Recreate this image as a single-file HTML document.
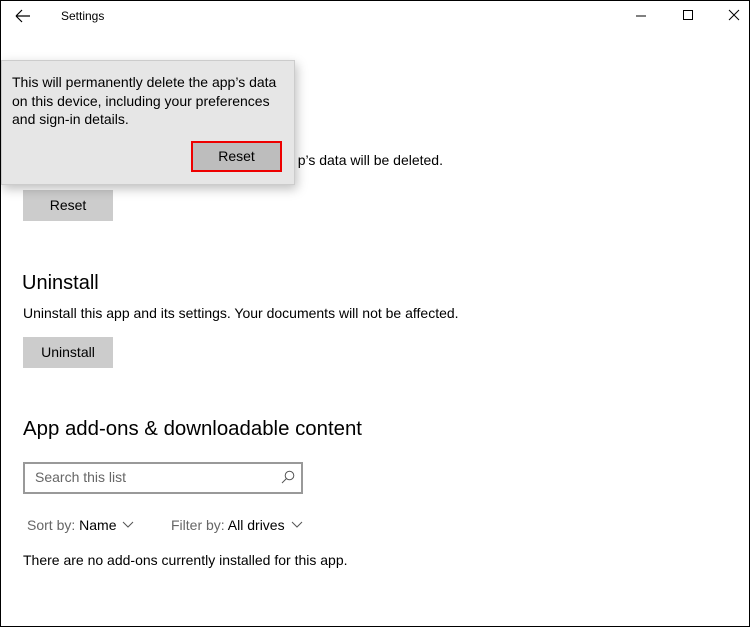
<!DOCTYPE html>
<html><head><style>
*{margin:0;padding:0;box-sizing:border-box}
body{width:750px;height:627px;overflow:hidden;background:#fff;font-family:"Liberation Sans",sans-serif;color:#000;position:relative}
.win{position:absolute;left:0;top:0;width:750px;height:627px;border:1px solid #000}
.a{position:absolute;white-space:nowrap}
.btn{position:absolute;background:#ccc;font-size:14px;text-align:center}
</style></head><body>
<div class="win"></div>
<svg class="a" style="left:15px;top:9px" width="16" height="14"><path d="M1 7H15M1 7L7 1M1 7L7 13" stroke="#000" stroke-width="1.2" fill="none"/></svg>
<div class="a" style="left:61px;top:9px;font-size:12px">Settings</div>
<svg class="a" style="left:636px;top:9px" width="110" height="14"><path d="M0 7H10" stroke="#000"/><path d="M47.5 1.5h9v9h-9z" stroke="#000" fill="none"/><path d="M93 1L103 11M103 1L93 11" stroke="#000"/></svg>
<div class="a" style="right:307px;top:152px;font-size:14px">p’s data will be deleted.</div>
<div class="btn" style="left:23px;top:190px;width:90px;height:31px;line-height:31px">Reset</div>
<div class="a" style="left:22px;top:272px;font-size:20px">Uninstall</div>
<div class="a" style="left:23px;top:305px;font-size:14px">Uninstall this app and its settings. Your documents will not be affected.</div>
<div class="btn" style="left:23px;top:337px;width:90px;height:31px;line-height:31px">Uninstall</div>
<div class="a" style="left:23px;top:418px;font-size:20.4px">App add-ons &amp; downloadable content</div>
<div class="a" style="left:23px;top:462px;width:280px;height:32px;border:2px solid #999"></div>
<div class="a" style="left:35px;top:469px;font-size:14px;color:#666">Search this list</div>
<svg class="a" style="left:281px;top:470px" width="14" height="14"><circle cx="8.5" cy="5.5" r="4.3" stroke="#555" fill="none"/><path d="M5.5 8.5L1 13" stroke="#555"/></svg>
<div class="a" style="left:27px;top:517px;font-size:14px"><span style="color:#666">Sort by:</span> Name</div>
<svg class="a" style="left:122px;top:521px" width="12" height="7"><path d="M1 1L6 6L11 1" stroke="#555" fill="none"/></svg>
<div class="a" style="left:171px;top:517px;font-size:14px"><span style="color:#666">Filter by:</span> All drives</div>
<svg class="a" style="left:291px;top:521px" width="12" height="7"><path d="M1 1L6 6L11 1" stroke="#555" fill="none"/></svg>
<div class="a" style="left:23px;top:552px;font-size:14px">There are no add-ons currently installed for this app.</div>
<div class="a" style="left:1px;top:60px;width:294px;height:125px;background:#e6e6e6;border:1px solid #ccc;box-shadow:2px 4px 10px rgba(0,0,0,.25)"></div>
<div class="a" style="left:12px;top:73px;font-size:14px;line-height:18.5px">This will permanently delete the app’s data<br>on this device, including your preferences<br>and sign-in details.</div>
<div class="btn" style="left:191px;top:141px;width:91px;height:31px;line-height:27px;border:2px solid #e00;background:#bdbdbd">Reset</div>
</body></html>
